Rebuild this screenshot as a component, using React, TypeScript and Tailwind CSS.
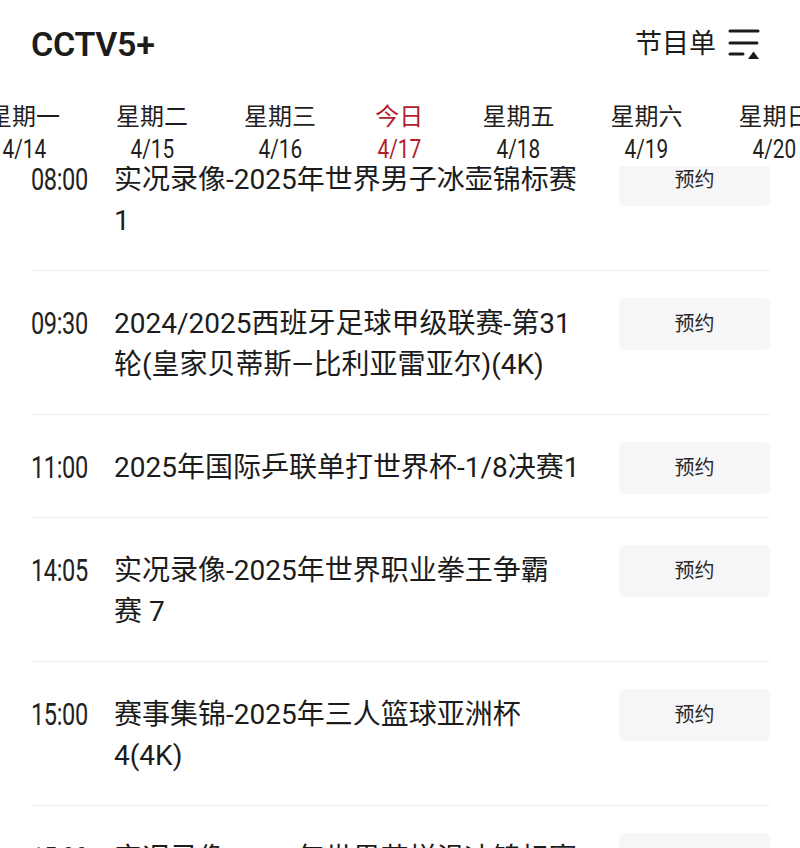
import React from 'react';

const days = [
  { label: '星期一', date: '4/14' },
  { label: '星期二', date: '4/15' },
  { label: '星期三', date: '4/16' },
  { label: '今日', date: '4/17', active: true },
  { label: '星期五', date: '4/18' },
  { label: '星期六', date: '4/19' },
  { label: '星期日', date: '4/20' },
];

const programs = [
  { time: '08:00', lines: ['实况录像-2025年世界男子冰壶锦标赛', '1'] },
  { time: '09:30', lines: ['2024/2025西班牙足球甲级联赛-第31', '轮(皇家贝蒂斯—比利亚雷亚尔)(4K)'] },
  { time: '11:00', lines: ['2025年国际乒联单打世界杯-1/8决赛1'] },
  { time: '14:05', lines: ['实况录像-2025年世界职业拳王争霸', '赛 7'] },
  { time: '15:00', lines: ['赛事集锦-2025年三人篮球亚洲杯', '4(4K)'] },
  { time: '15:30', lines: ['实况录像-2025年世界花样滑冰锦标赛', '1'] },
];

function ListIcon() {
  return (
    <svg width="32" height="34" viewBox="0 0 32 34" fill="none">
      <path d="M2 4H30M2 16H29M2 27H15" stroke="#1a1a1a" strokeWidth="3" strokeLinecap="round" />
      <path d="M20 32L25.5 24.5L31 32Z" fill="#1a1a1a" />
    </svg>
  );
}

export default function App() {
  return (
    <div
      className="w-[800px] h-[848px] bg-white overflow-hidden flex flex-col text-[#1c1c1c]"
      style={{ fontFamily: 'Roboto, "Noto Sans CJK SC", sans-serif' }}
    >
      {/* Header */}
      <div className="relative z-10 bg-white h-[166px] shrink-0">
        <div className="h-[88px] flex items-center justify-between pl-[31px] pr-[40px]">
          <span className="text-[34px] font-semibold tracking-[-0.3px]">CCTV5+</span>
          <div className="flex items-center gap-[12px]">
            <span className="text-[27px]">节目单</span>
            <ListIcon />
          </div>
        </div>
        <div className="overflow-hidden pt-[13px]">
          <div className="flex gap-[56px] -ml-[12px] w-max">
            {days.map((d) => (
              <div
                key={d.date}
                className={`flex flex-col items-center ${d.active ? 'text-[#b1202b]' : 'text-[#1f1f1f]'}`}
              >
                <span className="text-[24px] leading-[32px]">{d.label}</span>
                <span className="text-[26px] leading-[32px] inline-block scale-x-[0.8]">{d.date}</span>
              </div>
            ))}
          </div>
        </div>
      </div>

      {/* Schedule list */}
      <div className="flex-1 overflow-hidden">
        <div className="-mt-[39px] pl-[31px] pr-[30px]">
          {programs.map((p) => (
            <div key={p.time} className="flex items-start pt-[27px] border-b border-[#ededed]">
              <div className="w-[83px] shrink-0 mt-[5px] leading-[41px]">
                <span className="inline-block text-[31px] text-[#222] origin-left scale-x-[0.76] tracking-[-0.5px]">
                  {p.time}
                </span>
              </div>
              <div className="flex-1 mt-[5px] mb-[29px] text-[28px] leading-[41px]">
                {p.lines.map((l, i) => (
                  <div key={i} className="whitespace-nowrap">{l}</div>
                ))}
              </div>
              <button className="w-[151px] h-[52px] shrink-0 rounded-[6px] bg-[#f6f6f8] text-[20px] text-[#2a2a2a]">
                预约
              </button>
            </div>
          ))}
        </div>
      </div>
    </div>
  );
}
